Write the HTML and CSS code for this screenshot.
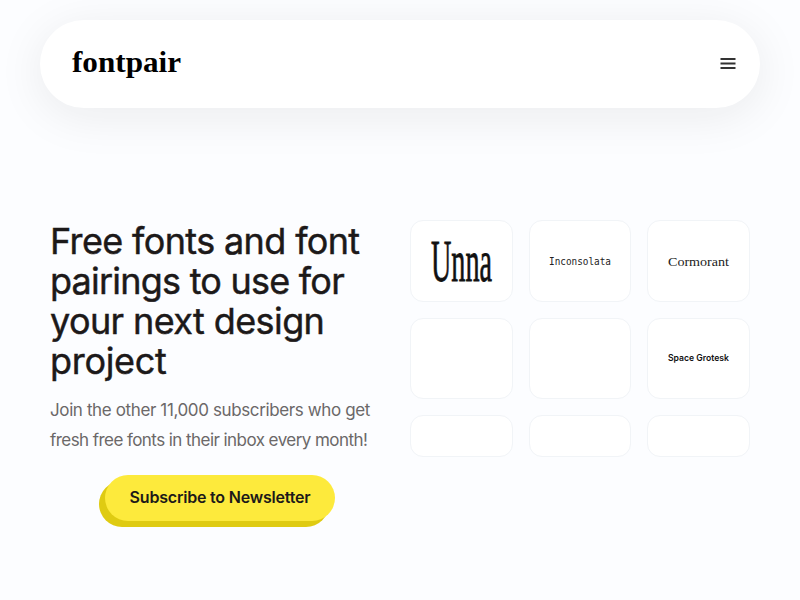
FILE: index.html
```html
<!DOCTYPE html>
<html lang="en">
<head>
<meta charset="utf-8">
<title>fontpair</title>
<link rel="stylesheet" href="styles.css">
</head>
<body>
<header class="nav">
  <a class="logo"><svg width="112" height="34" viewBox="0 0 112 34"><text x="1" y="25" textLength="109" lengthAdjust="spacingAndGlyphs">fontpair</text></svg></a>
  <svg class="menu" width="16" height="14" viewBox="0 0 16 14"><path d="M.5 2h15M.5 6.5h15M.5 11h15"/></svg>
</header>
<main class="hero">
  <section class="copy">
    <h1><span class="h-a">Free fonts and font</span> <span class="h-b">pairings to use for</span> <span class="h-c">your next design</span> <span class="h-d">project</span></h1>
    <p><span class="p-a">Join the other 11,000 subscribers who get</span> <span class="p-b">fresh free fonts in their inbox every month!</span></p>
    <a class="button"><span>Subscribe to Newsletter</span></a>
  </section>
  <section class="grid">
    <div class="card"><svg width="62" height="50" viewBox="0 0 62 50"><text class="unna" transform="translate(1 44.5) scale(1 2.3)" textLength="61" lengthAdjust="spacingAndGlyphs">Unna</text></svg></div>
    <div class="card"><svg width="62" height="20" viewBox="0 0 62 20"><text class="mono" x="0" y="13.5" textLength="62" lengthAdjust="spacingAndGlyphs">Inconsolata</text></svg></div>
    <div class="card"><svg width="62" height="20" viewBox="0 0 62 20"><text class="serif" x="0" y="14.5" textLength="61" lengthAdjust="spacingAndGlyphs">Cormorant</text></svg></div>
    <div class="card"></div>
    <div class="card"></div>
    <div class="card"><svg width="62" height="20" viewBox="0 0 62 20"><text class="grotesk" x="0" y="12.5" textLength="61" lengthAdjust="spacingAndGlyphs">Space Grotesk</text></svg></div>
    <div class="card"></div>
    <div class="card"></div>
    <div class="card"></div>
  </section>
</main>
</body>
</html>
```
FILE: styles.css
```css
* { box-sizing: border-box; }
body {
  margin: 0;
  padding: 20px 40px 0;
  height: 600px;
  overflow: hidden;
  background: #fcfdff;
  color: #1c1919;
  font-family: Inter, "Liberation Sans", sans-serif;
}
svg { display: block; overflow: visible; }
.nav {
  display: flex;
  align-items: center;
  justify-content: space-between;
  height: 88px;
  padding: 0 24px 0 31px;
  border-radius: 44px;
  background: #fff;
  box-shadow: 0 8px 48px rgba(20, 20, 30, .08);
}
.logo text {
  font: 700 29px "Liberation Serif", serif;
  fill: #000;
}
.menu path { stroke: #333; stroke-width: 2; fill: none; }
.hero {
  display: flex;
  justify-content: space-between;
  padding: 112px 10px 0;
}
.copy { width: 330px; padding-top: 1px; }
h1 {
  margin: 0;
  font-size: 36px;
  font-weight: 400;
  line-height: 40px;
  -webkit-text-stroke: .45px #1c1919;
}
h1 span, p span { display: block; white-space: nowrap; }
.h-a { letter-spacing: -.63px; }
.h-b { letter-spacing: -.77px; }
.h-c { letter-spacing: -.6px; }
.h-d { letter-spacing: -.3px; }
p {
  margin: 14px 0 20px;
  color: #6b6868;
  font-size: 17px;
  line-height: 30px;
}
.p-a { letter-spacing: -.38px; }
.p-b { letter-spacing: -.56px; }
.button {
  display: flex;
  align-items: center;
  justify-content: center;
  width: 230px;
  height: 46px;
  margin-left: 55px;
  padding-bottom: 2px;
  border-radius: 23px;
  background: #fdea3c;
  box-shadow: -6px 6px 0 #dfcb12;
  font-size: 16px;
  font-weight: 600;
  letter-spacing: -.2px;
  white-space: nowrap;
}
.grid {
  display: grid;
  grid-template-columns: repeat(3, 1fr);
  grid-template-rows: 81.5px 81.5px 42px;
  gap: 16px;
  width: 340px;
}
.card {
  display: flex;
  align-items: center;
  justify-content: center;
  border: 1px solid #f1f4f7;
  border-radius: 13px;
  background: #fff;
}
.unna { font: 26px "Liberation Serif", serif; fill: #111; stroke: #111; stroke-width: .35px; }
.mono { font: 11px "DejaVu Sans Mono", monospace; fill: #222; }
.serif { font: 13.5px "Liberation Serif", serif; fill: #222; }
.grotesk { font: 600 9px Inter, sans-serif; fill: #111; }
```
